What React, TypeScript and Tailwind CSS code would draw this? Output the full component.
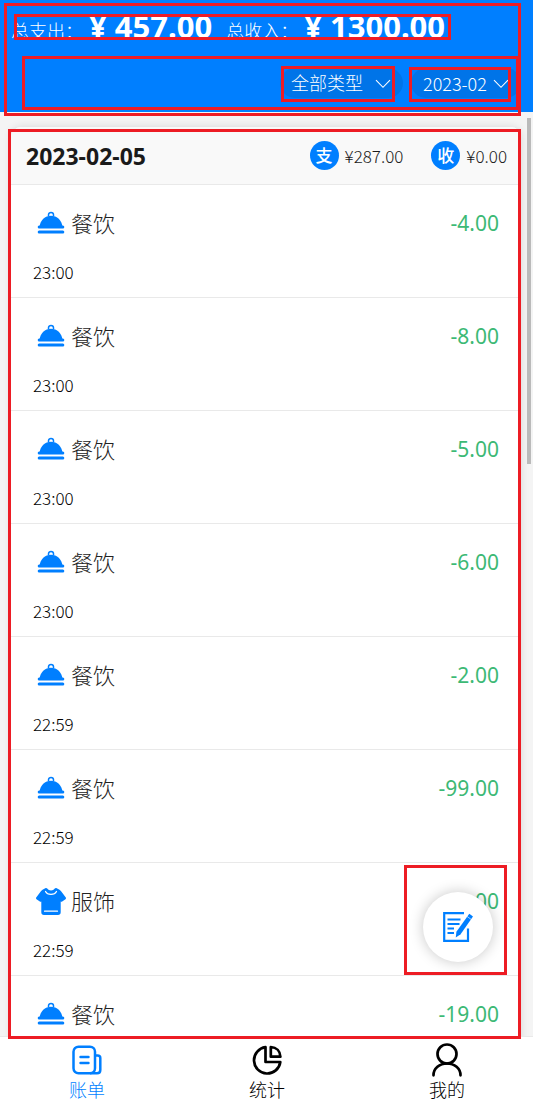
import React from "react";

type Category = "food" | "clothes";

interface Bill {
  category: Category;
  amount: string;
  time: string;
}

const bills: Bill[] = [
  { category: "food", amount: "-4.00", time: "23:00" },
  { category: "food", amount: "-8.00", time: "23:00" },
  { category: "food", amount: "-5.00", time: "23:00" },
  { category: "food", amount: "-6.00", time: "23:00" },
  { category: "food", amount: "-2.00", time: "22:59" },
  { category: "food", amount: "-99.00", time: "22:59" },
  { category: "clothes", amount: "-9.00", time: "22:59" },
  { category: "food", amount: "-19.00", time: "22:59" },
];

const categoryNames: Record<Category, string> = { food: "餐饮", clothes: "服饰" };

/* Red outline laid over a region; the position comes from the class name. */
function Outline({ className }: { className: string }) {
  return (
    <span
      aria-hidden="true"
      className={`pointer-events-none absolute z-30 border-[3px] border-[#ed1c24] ${className}`}
    />
  );
}

function FoodIcon() {
  return (
    <svg viewBox="0 0 30 30" className="size-[30px] shrink-0" fill="#007fff" aria-hidden="true">
      <path d="M12.500 8V6.800A2.500 2.300 0 0 1 17.500 6.800V8" fill="none" stroke="#007fff" strokeWidth="1.500" />
      <path d="M3.500 18.700C4.200 12.200 9 7.700 15 7.700S25.800 12.200 26.500 18.700Z" />
      <rect x="1.700" y="17.400" width="26.600" height="3" rx="1.500" />
      <rect x="1.700" y="22.400" width="26.600" height="3" rx="1.500" />
    </svg>
  );
}

function ClothesIcon() {
  return (
    <svg viewBox="0 0 30 30" className="size-[30px] shrink-0" aria-hidden="true">
      <path
        fill="#007fff"
        d="M9.300 2.200C10 1.700 10.700 1.800 11.200 2.500C13 5 17 5 18.800 2.500C19.300 1.800 20 1.700 20.700 2.200L23.500 3.700C24.300 4.200 25 5 25.500 5.800L29.800 11.500C30.200 12.100 30 12.800 29.500 13.200L26.200 15.600C25.500 16.100 25 15.800 24.700 15.400V26.200C24.700 28 23.700 29 22 29H8C6.300 29 5.300 28 5.300 26.200V15.400C5 15.800 4.500 16.100 3.800 15.600L0.500 13.200C0 12.800-0.200 12.100 0.200 11.500L4.500 5.800C5 5 5.700 4.200 6.500 3.700Z"
      />
      <path
        fill="none"
        stroke="#fff"
        strokeWidth="1.200"
        strokeLinecap="round"
        d="M9.500 5.500C11.500 9.300 18.500 9.300 20.500 5.500M8.500 25.200H21.500"
      />
    </svg>
  );
}

function Chevron() {
  return (
    <svg
      viewBox="0 0 16 10"
      className="pointer-events-none absolute right-3 top-[11px] h-2.5 w-4"
      fill="none"
      stroke="#fff"
      strokeWidth="1.100"
      aria-hidden="true"
    >
      <path d="M1 1.200L8 8.300L15 1.200" />
    </svg>
  );
}

function BillIcon() {
  return (
    <svg viewBox="0 0 30 30" className="size-[30px]" fill="none" stroke="currentColor" aria-hidden="true">
      <rect x="1.500" y="1.700" width="21.500" height="26.600" rx="5" strokeWidth="2.500" />
      <path d="M23 10.500H25.500C27.200 10.500 28.300 11.500 28.300 13V25C28.300 27 27.200 28.300 25 28.300H18" strokeWidth="2.500" />
      <path d="M8.500 12H16.500M8.500 18H16.500" strokeWidth="2.400" strokeLinecap="round" />
    </svg>
  );
}

function StatsIcon() {
  return (
    <svg
      viewBox="0 0 30 30"
      className="size-[30px]"
      fill="none"
      stroke="currentColor"
      strokeWidth="2.700"
      strokeLinejoin="round"
      aria-hidden="true"
    >
      <path d="M13.500 2.200V17H28.300A13.200 13.200 0 1 1 13.500 2.200Z" />
      <path d="M18.800 2V11.700H28.400C28.200 6.300 24.500 2.300 18.800 2Z" />
    </svg>
  );
}

function UserIcon() {
  return (
    <svg
      viewBox="0 0 30 34"
      className="-mt-0.5 -mb-0.5 h-[34px] w-[30px]"
      fill="none"
      stroke="currentColor"
      strokeWidth="2.700"
      strokeLinecap="round"
      aria-hidden="true"
    >
      <circle cx="15" cy="11" r="9.500" />
      <path d="M1.500 32.300C1.500 25.500 7.500 20.500 15 20.500S28.500 25.500 28.500 32.300" />
    </svg>
  );
}

function EditIcon() {
  return (
    <svg viewBox="0 0 30 30" className="size-[30px]" fill="none" stroke="#007fff" aria-hidden="true">
      <path d="M21 1.200H1.200V28.800H25V16.500" strokeWidth="2.200" />
      <path d="M4.500 7.500H17.500M4.500 12H16.500M4.500 16.500H11M4.500 21H11" strokeWidth="2" />
      <path d="M26.300 1.800L30 4.500L17.600 22.300L12.800 25.400L13.400 19.700Z" fill="#007fff" stroke="none" />
      <path d="M24 4.400L28.600 7.700" stroke="#fff" strokeWidth="0.600" />
    </svg>
  );
}

function DaySum({ mark, value }: { mark: string; value: string }) {
  return (
    <div className="flex items-center gap-1.5">
      <span className="flex size-[29px] items-center justify-center rounded-full bg-[#007fff] text-[17px] leading-none font-medium text-white">
        {mark}
      </span>
      <span className="font-['Noto_Sans_CJK_SC',sans-serif] text-[17px] leading-6 text-[#1a1a1a]">{value}</span>
    </div>
  );
}

function BillRow({ bill }: { bill: Bill }) {
  return (
    <li className="h-[113px] border-b border-[#e9e9e9] px-[22px] pt-[23px]">
      <div className="flex items-center justify-between">
        <div className="flex items-center gap-[5px] pl-[3px]">
          {bill.category === "food" ? <FoodIcon /> : <ClothesIcon />}
          <span className="text-[22px] leading-[30px] text-[#222]">{categoryNames[bill.category]}</span>
        </div>
        <span className="text-[21px] leading-[30px] font-normal text-[#3cb975]">{bill.amount}</span>
      </div>
      <p className="mt-[22px] font-['Noto_Sans_CJK_SC',sans-serif] text-[17px] leading-6 text-black">
        {bill.time}
      </p>
    </li>
  );
}

export default function App() {
  return (
    <div className="relative flex h-screen flex-col overflow-hidden bg-[#f4f4f4] font-['Noto_Sans','Noto_Sans_CJK_SC',sans-serif] font-light">
      <header className="relative h-28 shrink-0 bg-[#007fff] pt-3.5 pr-3 pl-[11px] text-white">
        <div className="relative w-fit">
          <div className="flex h-[26px] items-baseline gap-1.5 overflow-hidden leading-6 whitespace-nowrap">
            <span className="text-[18px]">总支出：</span>
            <b className="text-[31px] font-bold">¥ 457.00</b>
            <span className="ml-2 text-[18px]">总收入：</span>
            <b className="text-[31px] font-bold">¥ 1300.00</b>
          </div>
          <Outline className="top-0 -right-1.5 bottom-0 left-[3px]" />
        </div>
        <div className="mt-7 flex justify-end gap-2">
          <div className="relative">
            <select
              aria-label="类型"
              className="h-[30px] w-[123px] appearance-none rounded-full bg-[#0074e8] pr-8 pl-[11px] text-[18px] leading-[30px] text-white"
            >
              <option>全部类型</option>
            </select>
            <Chevron />
            <Outline className="-top-0.5 right-2 -bottom-1 left-px" />
          </div>
          <div className="relative">
            <select
              aria-label="月份"
              className="h-[30px] w-[110px] appearance-none rounded-full bg-[#0074e8] pr-7 pl-3 font-['Noto_Sans_CJK_SC',sans-serif] text-[18px] leading-[30px] text-white"
            >
              <option>2023-02</option>
            </select>
            <Chevron />
            <Outline className="-top-px right-2.5 -bottom-1 -left-0.5" />
          </div>
        </div>
        <Outline className="top-14 right-3.5 bottom-0.5 left-[22px]" />
        <Outline className="top-[3px] right-3 -bottom-1 left-1" />
      </header>

      <div className="relative min-h-0 flex-1">
        <main className="h-full overflow-hidden pt-[15px] pr-3 pl-[11px]">
          <section className="rounded-t-[10px] bg-white shadow-[0_0_8px_rgba(0,0,0,0.12)]">
            <div className="flex h-[58px] items-center justify-between rounded-t-[10px] border-b border-[#e9e9e9] bg-[#f9f9f9] pr-3.5 pl-[15px]">
              <h2 className="text-[23px] leading-8 font-bold text-[#1a1a1a]">2023-02-05</h2>
              <div className="flex gap-7">
                <DaySum mark="支" value="¥287.00" />
                <DaySum mark="收" value="¥0.00" />
              </div>
            </div>
            <ul>
              {bills.map((bill, index) => (
                <BillRow key={index} bill={bill} />
              ))}
            </ul>
          </section>
        </main>
        <span aria-hidden="true" className="absolute top-1.5 right-0.5 h-[346px] w-1 bg-[#bababa]" />
        <button
          type="button"
          aria-label="记一笔"
          className="absolute right-10 bottom-[74px] flex size-[70px] items-center justify-center rounded-full bg-white shadow-[0_0_14px_rgba(0,0,0,0.22)]"
        >
          <EditIcon />
        </button>
        <Outline className="right-[26px] bottom-[61px] h-[110px] w-[103px]" />
        <Outline className="top-[17px] right-3 -bottom-[3px] left-2" />
      </div>

      <nav className="flex h-[70px] shrink-0 justify-between border-t border-[#e9e9e9] bg-white pr-[68px] pl-[69px] pt-2 text-[18px] leading-[30px] text-black">
        <a href="#bills" className="flex w-9 flex-col items-center whitespace-nowrap text-[#007fff]">
          <BillIcon />
          账单
        </a>
        <a href="#stats" className="flex w-9 flex-col items-center whitespace-nowrap">
          <StatsIcon />
          统计
        </a>
        <a href="#mine" className="flex w-9 flex-col items-center whitespace-nowrap">
          <UserIcon />
          我的
        </a>
      </nav>
    </div>
  );
}
